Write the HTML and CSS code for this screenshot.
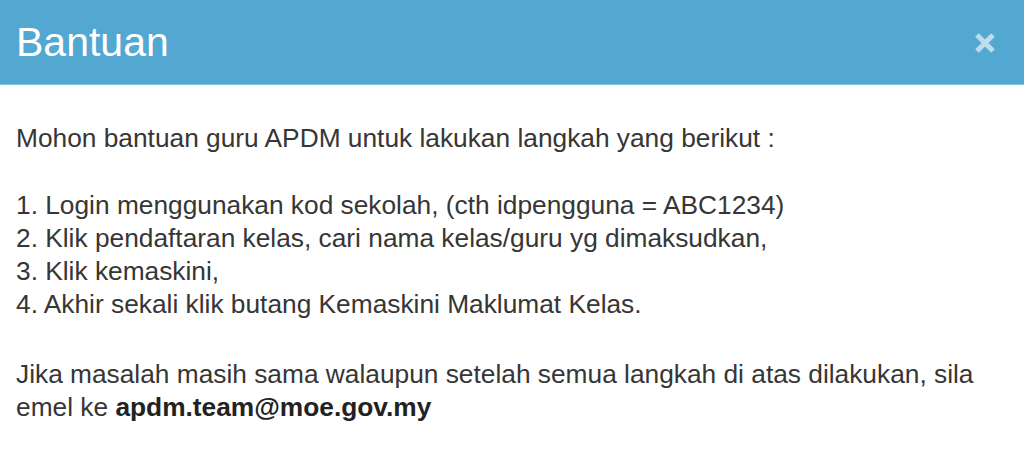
FILE: index.html
```html
<!DOCTYPE html>
<html>
<head>
<meta charset="utf-8">
<link rel="stylesheet" href="styles.css">
</head>
<body>
<div class="modal">
  <div class="modal-header">
    <h4 class="modal-title">Bantuan</h4>
    <button class="close" type="button" aria-label="Close">
      <svg width="22" height="22" viewBox="0 0 22 22"><path d="M3 3 L19 19 M19 3 L3 19" stroke="#bddcec" stroke-width="5.2" stroke-linecap="butt"/></svg>
    </button>
  </div>
  <div class="modal-body">
    <p>Mohon bantuan guru APDM untuk lakukan langkah yang berikut :</p>
    <p>1. Login menggunakan kod sekolah, (cth idpengguna = ABC1234)<br>
    2. Klik pendaftaran kelas, cari nama kelas/guru yg dimaksudkan,<br>
    3. Klik kemaskini,<br>
    4. Akhir sekali klik butang Kemaskini Maklumat Kelas.</p>
    <p class="last">Jika masalah masih sama walaupun setelah semua langkah di atas dilakukan, sila emel ke <b>apdm.team@moe.gov.my</b></p>
  </div>
</div>
</body>
</html>
```
FILE: styles.css
```css
html, body {
  margin: 0;
  padding: 0;
  background: #ffffff;
}
.modal {
  font-family: "Liberation Sans", Arial, sans-serif;
  color: #363636;
}
.modal-header {
  background: #53a8d1;
  height: 85px;
  border-bottom: 1px solid #86c1de;
  display: flex;
  align-items: center;
  justify-content: space-between;
  padding: 0 28px 0 16px;
  box-sizing: border-box;
}
.modal-title {
  margin: 0;
  color: #ffffff;
  font-size: 41px;
  font-weight: normal;
  line-height: 1;
  padding-top: 0;
}
.close {
  background: none;
  border: 0;
  padding: 0;
  width: 22px;
  height: 22px;
  display: flex;
  margin-top: 1px;
}
.modal-body {
  padding: 37px 17px 0 16px;
  font-size: 26.3px;
  line-height: 33.3px;
}
.modal-body p {
  margin: 0 0 33.3px 0;
}
.modal-body p.last {
  margin-top: 36px;
}
.modal-body b {
  font-weight: bold;
  color: #222;
}
```
